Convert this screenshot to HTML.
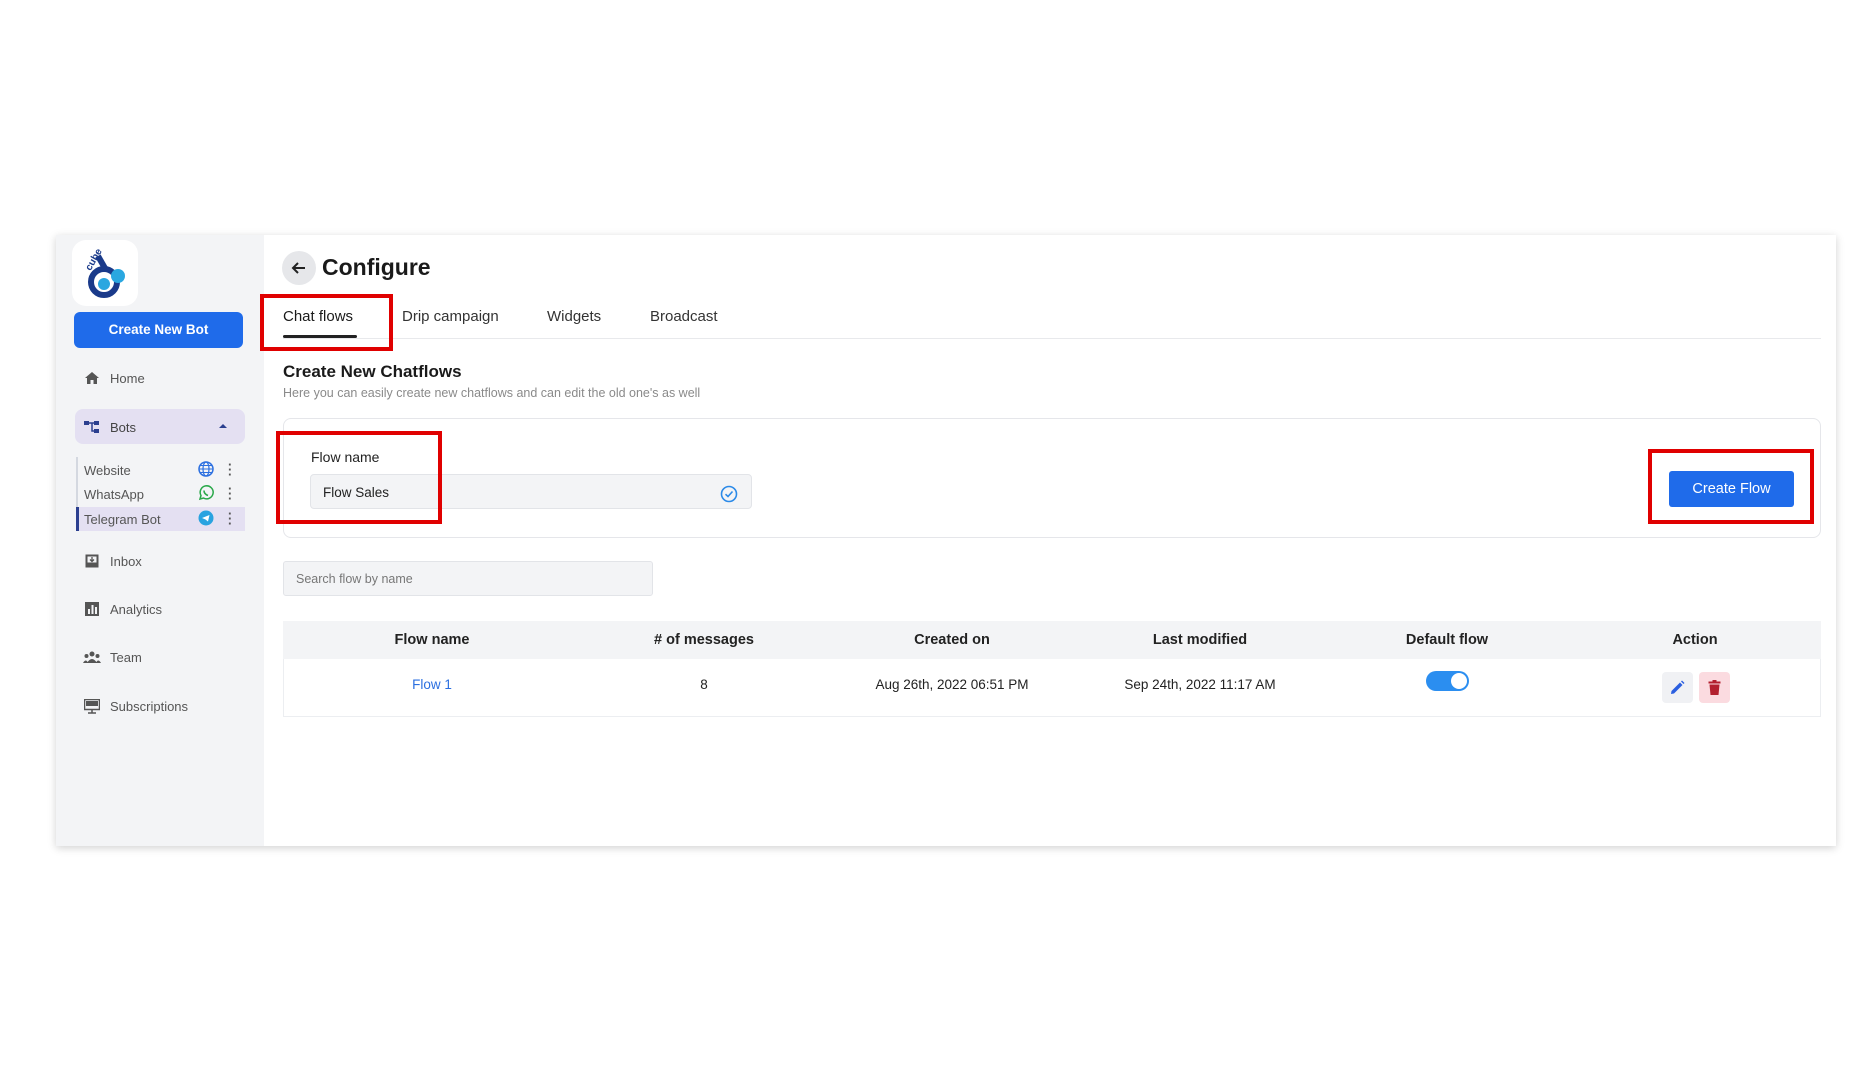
<!DOCTYPE html>
<html><head><meta charset="utf-8">
<style>
*{box-sizing:border-box;margin:0;padding:0}
body{width:1866px;height:1080px;background:#fff;font-family:"Liberation Sans",Arial,sans-serif;position:relative;overflow:hidden;color:#222}
.abs{position:absolute}
.card{left:56px;top:235px;width:1780px;height:611px;background:#fff;box-shadow:0 2px 8px rgba(0,0,0,.18)}
.side{left:56px;top:235px;width:208px;height:611px;background:#f3f4f6}
.nav{font-size:13px;color:#555}
.red{border:4px solid #e00000}
.th{top:632px;font-size:14.5px;font-weight:bold;color:#222;transform:translateX(-50%);white-space:nowrap}
.td{top:677px;font-size:13.5px;color:#222;transform:translateX(-50%);white-space:nowrap}
</style></head><body>
<div class="abs card"></div>
<div class="abs side"></div>
<div class="abs" style="left:72px;top:240px;width:66px;height:66px;background:#fff;border-radius:14px"></div>
<svg class="abs" style="left:78px;top:246px" width="56" height="56" viewBox="0 0 56 56">
<circle cx="26" cy="36" r="13" fill="none" stroke="#1a3a8a" stroke-width="6"/>
<path d="M20 10 L28 24" stroke="#1a3a8a" stroke-width="6"/>
<text x="6" y="22" font-size="10" font-weight="bold" fill="#1a3a8a" transform="rotate(-60 12 18)" font-family="Liberation Sans">cube</text>
<circle cx="40" cy="30" r="7" fill="#2aa7e0"/>
<circle cx="26" cy="38" r="6" fill="#2aa7e0"/>
</svg>
<div class="abs" style="left:74px;top:312px;width:169px;height:36px;background:#1f6bea;border-radius:6px;color:#fff;font-size:13.5px;font-weight:bold;text-align:center;line-height:36px">Create New Bot</div>
<svg class="abs" style="left:84px;top:371px" width="16" height="14" viewBox="0 0 16 14"><path d="M8 1 L1 7 H3 V13 H6.5 V9 H9.5 V13 H13 V7 H15 Z" fill="#555"/></svg>
<div class="abs nav" style="left:110px;top:371px">Home</div>
<div class="abs" style="left:75px;top:409px;width:170px;height:35px;background:#e4e0f2;border-radius:8px"></div>
<svg class="abs" style="left:84px;top:420px" width="16" height="14" viewBox="0 0 16 14"><rect x="0" y="1" width="5" height="4" fill="#2b3f8f"/><rect x="10" y="1" width="5" height="4" fill="#2b3f8f"/><rect x="10" y="9" width="5" height="4" fill="#2b3f8f"/><path d="M5 3H10M8 3V11H10" stroke="#2b3f8f" stroke-width="1.5" fill="none"/></svg>
<div class="abs nav" style="left:110px;top:420px;color:#444">Bots</div>
<div class="abs" style="left:219px;top:424px;width:0;height:0;border-left:4px solid transparent;border-right:4px solid transparent;border-bottom:4px solid #2b3f8f"></div>
<div class="abs" style="left:76px;top:457px;width:2px;height:74px;background:#d4d8e0"></div>
<div class="abs" style="left:77px;top:507px;width:168px;height:24px;background:#e4e0f2"></div>
<div class="abs" style="left:76px;top:507px;width:3px;height:24px;background:#2b3f8f"></div>
<div class="abs nav" style="left:84px;top:463px">Website</div>
<div class="abs nav" style="left:84px;top:487px">WhatsApp</div>
<div class="abs nav" style="left:84px;top:512px">Telegram Bot</div>
<svg class="abs" style="left:198px;top:461px" width="16" height="16" viewBox="0 0 16 16"><circle cx="8" cy="8" r="7" fill="none" stroke="#2b6fe0" stroke-width="1.5"/><ellipse cx="8" cy="8" rx="3" ry="7" fill="none" stroke="#2b6fe0" stroke-width="1.2"/><path d="M1 8H15M2 4.5H14M2 11.5H14" stroke="#2b6fe0" stroke-width="1.1"/></svg>
<svg class="abs" style="left:198px;top:485px" width="16" height="16" viewBox="0 0 16 16"><path d="M2 14 L3 10.5 A6.5 6.5 0 1 1 5.5 13 Z" fill="none" stroke="#2aa84a" stroke-width="1.5"/><path d="M6 5.5 Q6 9 10 10.5" stroke="#2aa84a" stroke-width="1.6" fill="none"/></svg>
<svg class="abs" style="left:198px;top:510px" width="16" height="16" viewBox="0 0 16 16"><circle cx="8" cy="8" r="7.5" fill="#29a3e0"/><path d="M4 8 L11.5 5 L10 11.5 L7.5 9.5 Z" fill="#fff"/></svg>
<div class="abs" style="left:228px;top:462px;font-size:13px;line-height:5px;color:#555;font-weight:bold">·<br>·<br>·</div>
<div class="abs" style="left:228px;top:486px;font-size:13px;line-height:5px;color:#555;font-weight:bold">·<br>·<br>·</div>
<div class="abs" style="left:228px;top:511px;font-size:13px;line-height:5px;color:#555;font-weight:bold">·<br>·<br>·</div>
<svg class="abs" style="left:85px;top:554px" width="14" height="14" viewBox="0 0 14 14"><rect x="0.5" y="0.5" width="13" height="13" fill="#555"/><rect x="2.5" y="2.5" width="9" height="6" fill="#f3f4f6"/><path d="M7 3V7M5 5.5L7 7.5L9 5.5" stroke="#555" stroke-width="1.3" fill="none"/></svg>
<div class="abs nav" style="left:110px;top:554px">Inbox</div>
<svg class="abs" style="left:85px;top:602px" width="14" height="14" viewBox="0 0 14 14"><rect width="14" height="14" fill="#555"/><rect x="3" y="7" width="2" height="5" fill="#f3f4f6"/><rect x="6.5" y="3" width="2" height="9" fill="#f3f4f6"/><rect x="10" y="5" width="2" height="7" fill="#f3f4f6"/></svg>
<div class="abs nav" style="left:110px;top:602px">Analytics</div>
<svg class="abs" style="left:83px;top:651px" width="18" height="12" viewBox="0 0 18 12"><circle cx="9" cy="3" r="2.5" fill="#555"/><circle cx="3.5" cy="5" r="2" fill="#555"/><circle cx="14.5" cy="5" r="2" fill="#555"/><path d="M4 12 Q9 4 14 12Z M0 12 Q3 7 5 12Z M13 12 Q15 7 18 12Z" fill="#555"/></svg>
<div class="abs nav" style="left:110px;top:650px">Team</div>
<svg class="abs" style="left:84px;top:699px" width="16" height="15" viewBox="0 0 16 15"><rect x="0.5" y="0.5" width="15" height="10" fill="none" stroke="#555" stroke-width="1.5"/><rect x="2" y="2" width="12" height="5" fill="#555"/><path d="M8 11V14M4 14H12" stroke="#555" stroke-width="1.5"/></svg>
<div class="abs nav" style="left:110px;top:699px">Subscriptions</div>
<div class="abs" style="left:282px;top:251px;width:34px;height:34px;border-radius:50%;background:#e6e7ea"></div>
<svg class="abs" style="left:290px;top:259px" width="18" height="18" viewBox="0 0 18 18"><path d="M15 9H3M8 4L3 9L8 14" stroke="#222" stroke-width="2" fill="none"/></svg>
<div class="abs" style="left:322px;top:254px;font-size:23px;font-weight:bold;color:#1a1a1a">Configure</div>
<div class="abs" style="left:283px;top:338px;width:1538px;height:1px;background:#e8e9ec"></div>
<div class="abs" style="left:283px;top:308px;font-size:15px;color:#1a1a1a">Chat flows</div>
<div class="abs" style="left:283px;top:335px;width:74px;height:3px;background:#222;border-radius:2px"></div>
<div class="abs" style="left:402px;top:308px;font-size:15px;color:#333">Drip campaign</div>
<div class="abs" style="left:547px;top:308px;font-size:15px;color:#333">Widgets</div>
<div class="abs" style="left:650px;top:308px;font-size:15px;color:#333">Broadcast</div>
<div class="abs red" style="left:260px;top:294px;width:133px;height:57px"></div>
<div class="abs" style="left:283px;top:362px;font-size:17px;font-weight:bold;color:#1a1a1a">Create New Chatflows</div>
<div class="abs" style="left:283px;top:386px;font-size:12.5px;color:#8a8a8a">Here you can easily create new chatflows and can edit the old one's as well</div>
<div class="abs" style="left:283px;top:418px;width:1538px;height:120px;border:1px solid #e5e6ea;border-radius:8px"></div>
<div class="abs" style="left:311px;top:449px;font-size:14px;color:#222">Flow name</div>
<div class="abs" style="left:310px;top:474px;width:442px;height:35px;background:#f3f4f6;border:1px solid #e2e4e8;border-radius:4px"></div>
<div class="abs" style="left:323px;top:485px;font-size:13.5px;color:#222">Flow Sales</div>
<svg class="abs" style="left:720px;top:485px" width="18" height="18" viewBox="0 0 18 18"><circle cx="9" cy="9" r="7.5" fill="none" stroke="#2b8ae8" stroke-width="1.6"/><path d="M5.5 9.2L8 11.5L12.5 6.5" stroke="#2b8ae8" stroke-width="1.6" fill="none"/></svg>
<div class="abs red" style="left:276px;top:431px;width:166px;height:93px"></div>
<div class="abs" style="left:1669px;top:471px;width:125px;height:36px;background:#1f6bea;border-radius:3px;color:#fff;font-size:14.5px;text-align:center;line-height:36px">Create Flow</div>
<div class="abs red" style="left:1648px;top:449px;width:166px;height:75px"></div>
<div class="abs" style="left:283px;top:561px;width:370px;height:35px;background:#f3f4f6;border:1px solid #e2e4e8;border-radius:3px"></div>
<div class="abs" style="left:296px;top:572px;font-size:12.5px;color:#777">Search flow by name</div>
<div class="abs" style="left:283px;top:621px;width:1538px;height:38px;background:#f3f4f6"></div>
<div class="abs" style="left:283px;top:659px;width:1538px;height:58px;border:1px solid #eceef1;border-top:none"></div>
<div class="abs th" style="left:432px">Flow name</div>
<div class="abs th" style="left:704px"># of messages</div>
<div class="abs th" style="left:952px">Created on</div>
<div class="abs th" style="left:1200px">Last modified</div>
<div class="abs th" style="left:1447px">Default flow</div>
<div class="abs th" style="left:1695px">Action</div>
<div class="abs td" style="left:432px;color:#2b6fe0">Flow 1</div>
<div class="abs td" style="left:704px">8</div>
<div class="abs td" style="left:952px">Aug 26th, 2022 06:51 PM</div>
<div class="abs td" style="left:1200px">Sep 24th, 2022 11:17 AM</div>
<div class="abs" style="left:1426px;top:671px;width:43px;height:20px;border-radius:10px;background:#2b8ef0"></div>
<div class="abs" style="left:1451px;top:673px;width:16px;height:16px;border-radius:50%;background:#fff"></div>
<div class="abs" style="left:1662px;top:672px;width:31px;height:31px;border-radius:4px;background:#f0f1f4"></div>
<svg class="abs" style="left:1670px;top:680px" width="15" height="15" viewBox="0 0 15 15"><path d="M1 14 L1.5 11 L10 2.5 L12.5 5 L4 13.5 Z" fill="#2b5fe0"/><path d="M11 1.5 L12 0.5 L14.5 3 L13.5 4Z" fill="#2b5fe0"/></svg>
<div class="abs" style="left:1699px;top:672px;width:31px;height:31px;border-radius:4px;background:#fbdbe0"></div>
<svg class="abs" style="left:1708px;top:680px" width="13" height="15" viewBox="0 0 13 15"><rect x="0.5" y="1.5" width="12" height="2" fill="#b3202f"/><rect x="4.5" y="0" width="4" height="2" fill="#b3202f"/><path d="M1.5 4.5H11.5L10.5 15H2.5Z" fill="#b3202f"/></svg>
</body></html>
